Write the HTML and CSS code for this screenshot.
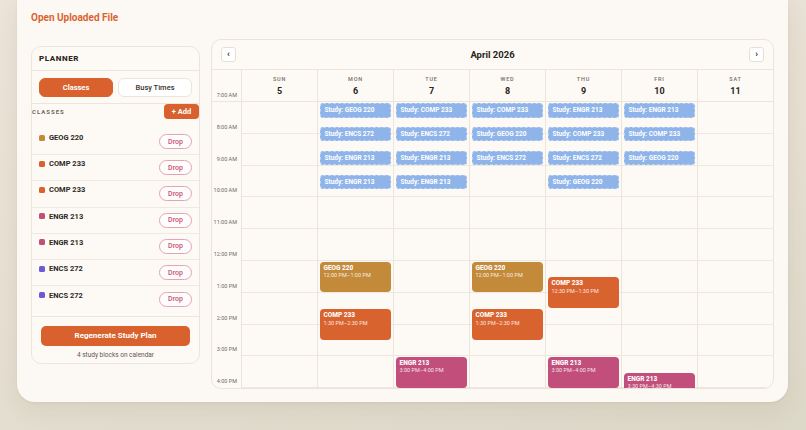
FILE: index.html
```html
<!DOCTYPE html>
<html>
<head>
<meta charset="utf-8">
<link rel="stylesheet" href="styles.css">
</head>
<body>
<div class="card">
  <div class="open-link">Open Uploaded File</div>
  <div class="main">
    <aside class="planner">
      <div class="planner-head">PLANNER</div>
      <div class="tabs">
        <button class="tab tab-active">Classes</button>
        <button class="tab">Busy Times</button>
      </div>
      <div class="section-head">
        <span class="section-label">CLASSES</span>
        <button class="add-btn">+ Add</button>
      </div>
      <ul class="class-list">
        <li class="class-row"><span class="cls"><i class="dot gold"></i>GEOG 220</span><button class="drop">Drop</button></li>
        <li class="class-row"><span class="cls"><i class="dot orange"></i>COMP 233</span><button class="drop">Drop</button></li>
        <li class="class-row"><span class="cls"><i class="dot orange"></i>COMP 233</span><button class="drop">Drop</button></li>
        <li class="class-row"><span class="cls"><i class="dot pink"></i>ENGR 213</span><button class="drop">Drop</button></li>
        <li class="class-row"><span class="cls"><i class="dot pink"></i>ENGR 213</span><button class="drop">Drop</button></li>
        <li class="class-row"><span class="cls"><i class="dot purple"></i>ENCS 272</span><button class="drop">Drop</button></li>
        <li class="class-row"><span class="cls"><i class="dot purple"></i>ENCS 272</span><button class="drop">Drop</button></li>
      </ul>
      <div class="planner-foot">
        <button class="regen">Regenerate Study Plan</button>
        <div class="foot-note">4 study blocks on calendar</div>
      </div>
    </aside>

    <section class="calendar">
      <div class="cal-nav">
        <button class="nav-btn">‹</button>
        <div class="cal-title">April 2026</div>
        <button class="nav-btn">›</button>
      </div>
      <div class="cal-head">
        <div class="time-head"><span class="tlabel">7:00 AM</span></div>
        <div class="day-head"><span class="dname">SUN</span><span class="dnum">5</span></div>
        <div class="day-head"><span class="dname">MON</span><span class="dnum">6</span></div>
        <div class="day-head"><span class="dname">TUE</span><span class="dnum">7</span></div>
        <div class="day-head"><span class="dname">WED</span><span class="dnum">8</span></div>
        <div class="day-head"><span class="dname">THU</span><span class="dnum">9</span></div>
        <div class="day-head"><span class="dname">FRI</span><span class="dnum">10</span></div>
        <div class="day-head"><span class="dname">SAT</span><span class="dnum">11</span></div>
      </div>
      <div class="cal-body">
        <div class="cal-grid">
          <div class="time-col">
            <div class="tcell"><span class="tlabel">8:00 AM</span></div>
            <div class="tcell"><span class="tlabel">9:00 AM</span></div>
            <div class="tcell"><span class="tlabel">10:00 AM</span></div>
            <div class="tcell"><span class="tlabel">11:00 AM</span></div>
            <div class="tcell"><span class="tlabel">12:00 PM</span></div>
            <div class="tcell"><span class="tlabel">1:00 PM</span></div>
            <div class="tcell"><span class="tlabel">2:00 PM</span></div>
            <div class="tcell"><span class="tlabel">3:00 PM</span></div>
            <div class="tcell"><span class="tlabel">4:00 PM</span></div>
          </div>
          <div class="day-col"></div>
          <div class="day-col">
            <div class="ev study" style="top:1px">Study: GEOG 220</div>
            <div class="ev study" style="top:24.85px">Study: ENCS 272</div>
            <div class="ev study" style="top:48.7px">Study: ENGR 213</div>
            <div class="ev study" style="top:72.55px">Study: ENGR 213</div>
            <div class="ev cls-ev gold" style="top:159.5px"><b>GEOG 220</b><span>12:00 PM–1:00 PM</span></div>
            <div class="ev cls-ev orange" style="top:207.2px"><b>COMP 233</b><span>1:30 PM–2:30 PM</span></div>
          </div>
          <div class="day-col">
            <div class="ev study" style="top:1px">Study: COMP 233</div>
            <div class="ev study" style="top:24.85px">Study: ENCS 272</div>
            <div class="ev study" style="top:48.7px">Study: ENGR 213</div>
            <div class="ev study" style="top:72.55px">Study: ENGR 213</div>
            <div class="ev cls-ev pink" style="top:254.9px"><b>ENGR 213</b><span>3:00 PM–4:00 PM</span></div>
          </div>
          <div class="day-col">
            <div class="ev study" style="top:1px">Study: COMP 233</div>
            <div class="ev study" style="top:24.85px">Study: GEOG 220</div>
            <div class="ev study" style="top:48.7px">Study: ENCS 272</div>
            <div class="ev cls-ev gold" style="top:159.5px"><b>GEOG 220</b><span>12:00 PM–1:00 PM</span></div>
            <div class="ev cls-ev orange" style="top:207.2px"><b>COMP 233</b><span>1:30 PM–2:30 PM</span></div>
          </div>
          <div class="day-col">
            <div class="ev study" style="top:1px">Study: ENGR 213</div>
            <div class="ev study" style="top:24.85px">Study: COMP 233</div>
            <div class="ev study" style="top:48.7px">Study: ENCS 272</div>
            <div class="ev study" style="top:72.55px">Study: GEOG 220</div>
            <div class="ev cls-ev orange" style="top:175.4px"><b>COMP 233</b><span>12:30 PM–1:30 PM</span></div>
            <div class="ev cls-ev pink" style="top:254.9px"><b>ENGR 213</b><span>3:00 PM–4:00 PM</span></div>
          </div>
          <div class="day-col">
            <div class="ev study" style="top:1px">Study: ENGR 213</div>
            <div class="ev study" style="top:24.85px">Study: COMP 233</div>
            <div class="ev study" style="top:48.7px">Study: GEOG 220</div>
            <div class="ev cls-ev pink" style="top:270.8px"><b>ENGR 213</b><span>3:30 PM–4:30 PM</span></div>
          </div>
          <div class="day-col"></div>
        </div>
      </div>
    </section>
  </div>
</div>
</body>
</html>
```
FILE: styles.css
```css
* { box-sizing: border-box; }
html, body { margin: 0; padding: 0; }
body {
  width: 806px;
  height: 430px;
  overflow: hidden;
  font-family: Roboto, "Noto Sans", sans-serif;
  color: #2b2622;
  background: linear-gradient(165deg, #ece4d9 0%, #e6dfd2 55%, #dcd8c8 100%);
}
button { font-family: inherit; cursor: pointer; }

.card {
  margin-left: 17px;
  width: 771px;
  height: 402px;
  background: #fcf9f4;
  border-radius: 0 0 18px 18px;
  box-shadow: 0 8px 24px rgba(80, 60, 30, 0.08), 0 1px 3px rgba(80, 60, 30, 0.06);
  padding: 11px 14px 0;
}

.open-link {
  font-size: 10px;
  line-height: 14px;
  font-weight: 700;
  color: #d9632f;
  margin-bottom: 14px;
}

.main {
  display: grid;
  grid-template-columns: 169px 1fr;
  gap: 11px;
  align-items: start;
}

/* Planner */
.planner {
  margin-top: 7px;
  border: 1px solid #ece5db;
  border-radius: 10px;
  background: #fdfaf6;
  height: 318px;
  display: flex;
  flex-direction: column;
}
.planner-head {
  height: 24px;
  display: flex;
  align-items: center;
  padding-left: 7px;
  border-bottom: 1px solid #ece5db;
  font-size: 8px;
  font-weight: 800;
  letter-spacing: 0.6px;
  color: #2b2622;
}
.tabs {
  display: grid;
  grid-template-columns: 1fr 1fr;
  gap: 5px;
  padding: 7px 7px 6px;
  border-bottom: 1px solid #ece5db;
}
.tab {
  height: 19px;
  border-radius: 6px;
  border: 1px solid #ebe4da;
  background: #fff;
  color: #3a332d;
  font-size: 7.5px;
  font-weight: 500;
  padding: 0;
}
.tab-active {
  background: #d8612e;
  border-color: #d8612e;
  color: #fff;
  font-weight: 700;
}
.section-head {
  display: flex;
  justify-content: space-between;
  align-items: center;
  height: 15px;
  margin-top: 0;
}
.section-label {
  font-size: 6px;
  font-weight: 700;
  letter-spacing: 1px;
  color: #6f665d;
}
.add-btn {
  width: 35px;
  height: 15px;
  border: 0;
  border-radius: 4px;
  background: #d8612e;
  color: #fff;
  font-size: 7.5px;
  font-weight: 700;
  padding: 0;
}
.class-list {
  list-style: none;
  margin: 10px 0 0;
  padding: 0 0 4px;
}
.class-row {
  height: 26.2px;
  display: flex;
  align-items: center;
  justify-content: space-between;
  padding: 0 7px;
  border-bottom: 1px solid #efe9e0;
}
.class-row:last-child { border-bottom: 0; }
.cls {
  display: flex;
  align-items: center;
  gap: 4px;
  font-size: 7.5px;
  font-weight: 700;
  color: #2e2925;
  padding-bottom: 8px;
}
.dot {
  width: 6px;
  height: 6px;
  border-radius: 1.5px;
  display: inline-block;
}
.dot.gold { background: #c38a3a; }
.dot.orange { background: #d9632f; }
.dot.pink { background: #c14e7b; }
.dot.purple { background: #6c5ad6; }
.drop {
  width: 33px;
  height: 15px;
  border: 1px solid #e3a4b6;
  border-radius: 8px;
  background: #fffdfb;
  color: #c4507a;
  font-size: 7px;
  font-weight: 500;
  padding: 0;
}
.planner-foot {
  border-top: 1px solid #ece5db;
  padding: 6px 9px 0;
  text-align: center;
}
.regen {
  width: 100%;
  height: 20px;
  border: 0;
  border-radius: 5px;
  background: #d8612e;
  color: #fff;
  font-size: 8px;
  font-weight: 700;
  padding: 0;
}
.foot-note {
  margin-top: 4px;
  font-size: 6.5px;
  line-height: 10px;
  color: #5f574f;
}

/* Calendar */
.calendar {
  border: 1px solid #ebe4d9;
  border-radius: 10px;
  background: #fdfaf6;
  height: 350px;
  overflow: hidden;
  display: flex;
  flex-direction: column;
}
.cal-nav {
  height: 30px;
  flex: none;
  display: flex;
  align-items: center;
  justify-content: space-between;
  padding: 0 9px;
  border-bottom: 1px solid #ece5db;
}
.nav-btn {
  width: 15px;
  height: 15px;
  border: 1px solid #e6dfd5;
  border-radius: 3px;
  background: #fff;
  color: #2b2622;
  font-size: 9px;
  font-weight: 700;
  line-height: 11px;
  padding: 0;
}
.cal-title {
  font-size: 9.5px;
  font-weight: 700;
  color: #2a2520;
}
.cal-head {
  height: 32px;
  flex: none;
  display: grid;
  grid-template-columns: 29px repeat(7, 1fr);
  border-bottom: 1px solid #ece5db;
}
.time-head {
  display: flex;
  align-items: flex-end;
  justify-content: flex-end;
  padding: 0 4px 2px 0;
}
.tlabel {
  font-size: 5.5px;
  line-height: 8px;
  color: #6f675d;
  white-space: nowrap;
}
.day-head {
  border-left: 1px solid #ece5db;
  display: flex;
  flex-direction: column;
  align-items: center;
  padding-top: 5px;
}
.dname {
  font-size: 5.5px;
  line-height: 8px;
  letter-spacing: 0.8px;
  font-weight: 500;
  color: #766d64;
}
.dnum {
  margin-top: 2px;
  font-size: 9px;
  line-height: 12px;
  font-weight: 700;
  color: #2a2520;
}
.cal-body {
  flex: 1;
  overflow: hidden;
}
.cal-grid {
  display: grid;
  grid-template-columns: 29px repeat(7, 1fr);
  height: 349.8px;
}
.time-col {
  display: flex;
  flex-direction: column;
}
.tcell {
  height: 31.8px;
  flex: none;
  display: flex;
  align-items: flex-end;
  justify-content: flex-end;
  padding: 0 4px 3px 0;
}
.day-col {
  position: relative;
  border-left: 1px solid #ece5db;
  background-image: repeating-linear-gradient(to bottom,
    transparent 0, transparent 30.8px, #eee8de 30.8px, #eee8de 31.8px);
}
.ev {
  position: absolute;
  left: 1.5px;
  right: 2px;
  color: #fff;
  overflow: hidden;
}
.study {
  height: 14.5px;
  background: #8eb4ea;
  border: 1px dashed #bcd2f4;
  border-radius: 3px;
  font-size: 6.5px;
  font-weight: 700;
  line-height: 12.5px;
  padding-left: 4px;
  white-space: nowrap;
}
.cls-ev {
  height: 30.8px;
  border-radius: 4px;
  padding: 3px 4px 0;
  display: flex;
  flex-direction: column;
}
.cls-ev b {
  font-size: 6.5px;
  line-height: 7px;
  font-weight: 800;
}
.cls-ev span {
  font-size: 5.5px;
  line-height: 7px;
  margin-top: 0.5px;
  color: rgba(255, 255, 255, 0.88);
  white-space: nowrap;
}
.cls-ev.gold { background: #c38a3a; }
.cls-ev.orange { background: #d9632f; }
.cls-ev.pink { background: #c14e7b; }
```
